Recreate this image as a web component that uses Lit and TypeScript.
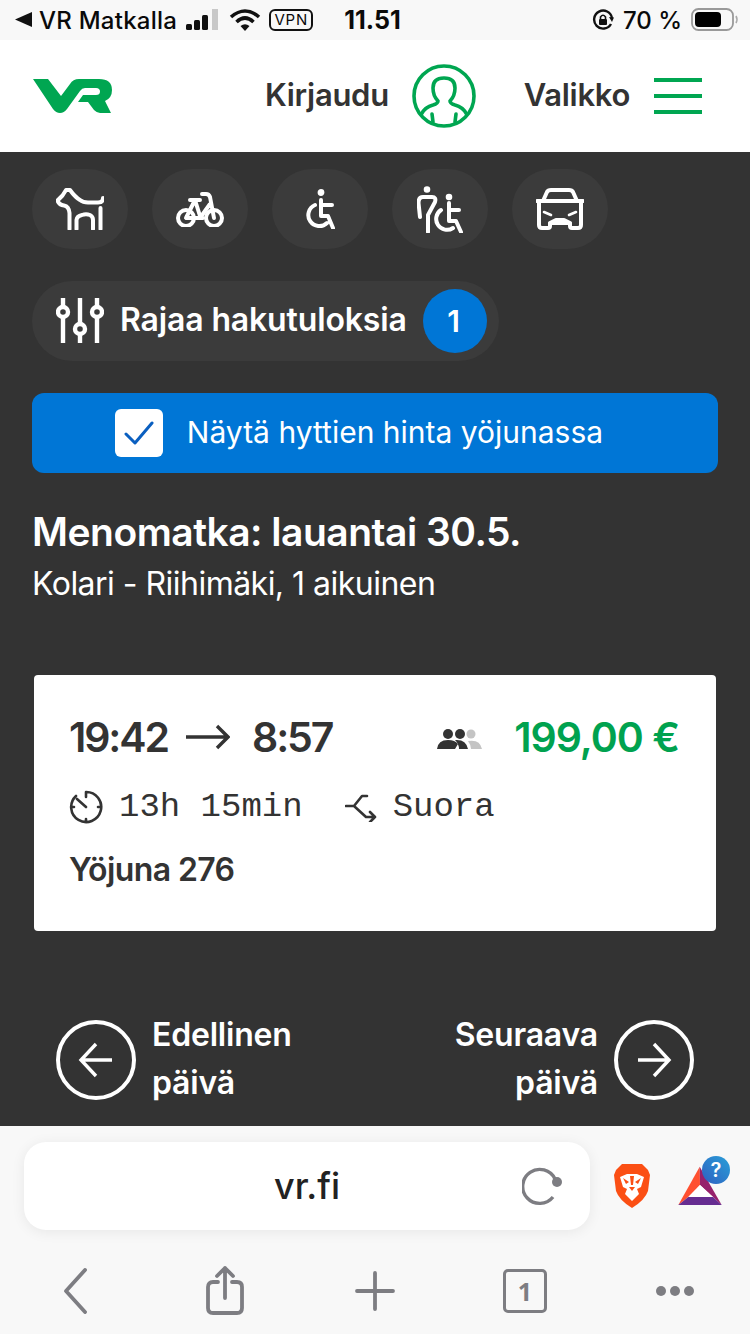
import { LitElement, html, css, svg } from "lit";
import { customElement } from "lit/decorators.js";

const dog = svg`<path d="M1.5 12.5 L6.5 7.5 L10 2 H14 Q19 9 24 12 Q27 14.5 32 14.5 H42 Q47 14.5 47 10 M1.5 12.5 Q3 17 8 17.5 Q13 18.5 13.5 25 V41 M20.5 41 V32 Q21 28 26 27 Q30 25.5 34 27 Q37 28.5 37 32 V41 M44.5 20 V41"/>`;
const bike = svg`<circle cx="10" cy="27" r="8"/><circle cx="38" cy="27" r="8"/><path d="M14 9 H24 M26 3 H30 Q33 3 34 6 L38 27 M19 9 L10 27 H27 M19 9 L24 25 M34 13 L24 27"/>`;
const chair = svg`<circle cx="16" cy="3.5" r="2.2" fill="#fff" stroke-width="2.4"/><path d="M16 11 V27 H23 L28 39 M16 16 H27 M10 16 A11 11 0 1 0 22 34"/>`;
const both = svg`<circle cx="10" cy="3.5" r="2" fill="#fff" stroke-width="2.6"/><circle cx="32" cy="11" r="2" fill="#fff" stroke-width="2.6"/><path d="M3 31 L1.5 17 Q1.5 11 6 11 H15 Q19.5 11 18 16 L11 29 V46 M32 17 V35 H39 L44 46 M32 24 H42 M24 24 A10.5 10.5 0 1 0 36 42"/>`;
const car = svg`<path d="M1 13 H47 M7 13 L11 4 Q12 2 15 2 H33 Q36 2 37 4 L41 13 M3 13 V37 Q3 40 6 40 H12 Q14 40 14 38 V35 H34 V38 Q34 40 36 40 H42 Q45 40 45 37 V13 M14 35 L20 32 H28 L34 35"/><path d="M8 24 L15 27 M40 24 L33 27" stroke-width="2.6"/>`;

@customElement("app-root")
export class AppRoot extends LitElement {
  static styles = css`
    :host { display: block; width: 750px; height: 1334px; overflow: hidden; font-family: Inter, "Liberation Sans", sans-serif; color: #333; }
    svg { display: block; flex: none; }
    .status { height: 40px; background: #f8f8f8; color: #0a0a0a; display: flex; align-items: center; font-size: 24px; font-weight: 500; padding-left: 15px; box-sizing: border-box; position: relative; }
    .status .carrier { margin-left: 6px; letter-spacing: .25px; }
    .vpn { border: 2px solid #111; border-radius: 6px; font-size: 15px; line-height: 18px; height: 18px; width: 40px; text-align: center; letter-spacing: .8px; font-weight: 400; margin-left: 8px; }
    .clock { font-weight: 700; font-size: 25px; margin-left: 31px; width: 62px; }
    .status-right { margin-left: auto; display: flex; align-items: center; padding-right: 11px; gap: 9px; }
    .header { height: 112px; background: #fff; display: flex; align-items: center; padding: 0 48px 0 32px; }
    .logo { margin-right: 153px; }
    .nav { font-size: 31px; line-height: 36px; margin-top: -2px; font-weight: 600; color: #333; letter-spacing: -.3px; }
    .user { margin: 0 48px 0 23px; }
    .burger { margin-left: 24px; width: 48px; display: flex; flex-direction: column; gap: 12px; }
    .burger i { display: block; height: 4px; background: #00a651; }
    main { height: 974px; box-sizing: border-box; background: #333; padding: 17px 32px 0; color: #fff; }
    .icons { display: flex; gap: 24px; }
    .icons div { width: 96px; height: 80px; border-radius: 40px; background: #3b3b3b; display: flex; align-items: center; justify-content: center; }
    .icons svg { fill: none; stroke: #fff; stroke-width: 4; stroke-linecap: round; stroke-linejoin: round; }
    .filter { margin-top: 32px; width: 467px; height: 80px; border-radius: 40px; background: #3b3b3b; display: flex; align-items: center; padding: 0 12px 0 24px; box-sizing: border-box; font-size: 32px; line-height: 40px; font-weight: 600; }
    .filter span { margin-left: 16px; letter-spacing: -.15px; margin-top: -3px; }
    .badge { margin-left: auto; width: 64px; height: 64px; border-radius: 50%; background: #0076d6; display: flex; align-items: center; justify-content: center; font-size: 30px; padding-right: 3px; box-sizing: border-box; }
    .check { margin-top: 32px; height: 80px; border-radius: 12px; background: #0076d6; display: flex; align-items: center; justify-content: center; gap: 24px; font-size: 30px; line-height: 36px; padding-right: 32px; box-sizing: border-box; }
    .check span { margin-top: -2px; }
    .box { width: 48px; height: 48px; background: #fff; border-radius: 6px; display: flex; align-items: center; justify-content: center; }
    h1 { margin: 37px 0 0; font-size: 39px; line-height: 44px; font-weight: 600; letter-spacing: -.5px; }
    .sub { margin: 12px 0 0; font-size: 32px; line-height: 36px; letter-spacing: -.52px; }
    .card { margin: 73px 2px 0; height: 256px; background: #fff; border-radius: 4px; color: #333; padding: 36px 37px 0 35px; box-sizing: border-box; }
    .row1 { display: flex; align-items: center; height: 52px; font-size: 41px; font-weight: 600; letter-spacing: -2.1px; }
    .row1 .arrow { margin: 0 22px 0 18px; }
    .people { margin-left: 105px; }
    .price { margin-left: auto; color: #00a24f; letter-spacing: -1px; }
    .row2 { display: flex; align-items: center; height: 36px; margin-top: 26px; font-family: "Liberation Mono", monospace; font-size: 34px; color: #333; }
    .row2 span { margin-left: 16px; }
    .row2 .sw { margin-left: 42px; }
    .train { margin-top: 25px; font-size: 32px; line-height: 40px; font-weight: 600; letter-spacing: -.6px; }
    .days { margin: 82px -8px 0; padding: 0 32px; display: flex; justify-content: space-between; font-size: 32px; font-weight: 600; line-height: 48px; letter-spacing: -.2px; }
    .day { display: flex; align-items: center; gap: 16px; }
    .day > div { margin-top: -2px; }
    .day.right { text-align: right; }
    .browser { height: 208px; background: #f8f8f8; padding: 16px 0 0 24px; box-sizing: border-box; }
    .url-row { display: flex; align-items: center; }
    .url { width: 566px; height: 88px; background: #fff; border-radius: 22px; box-shadow: 0 2px 14px rgba(0,0,0,.07); display: flex; align-items: center; justify-content: center; position: relative; font-size: 36px; font-weight: 500; color: #222; box-sizing: border-box; }
    .reload { position: absolute; right: 28px; top: 24px; }
    .brave { margin-left: 23px; }
    .bat { margin: 0 0 10px 27px; }
    .tools { display: flex; align-items: center; margin-top: 31px; padding-left: 39px; height: 60px; }
    .tools svg { fill: none; stroke: #7d7d82; stroke-width: 3.8; stroke-linecap: round; stroke-linejoin: round; }
    .tools .share { margin-left: 119px; }
    .tools .plus { margin-left: 111px; }
    .tab { margin-left: 108px; width: 44px; height: 44px; box-sizing: border-box; border: 3.5px solid #7d7d82; border-radius: 5px; font-size: 25px; font-weight: 700; color: #7d7d82; display: flex; align-items: center; justify-content: center; font-family: "Open Sans", sans-serif; }
    .tools .dots { margin-left: 108px; }
  `;

  render() {
    return html`
      <div class="status">
        <svg width="18" height="18" viewBox="0 0 18 18"><path d="M17 1 V16 L0 8.5 Z" fill="#111"/></svg>
        <span class="carrier">VR Matkalla</span>
        <svg style="margin-left:8px" width="34" height="22" viewBox="0 0 34 22">
          <rect x="1" y="15" width="6" height="6" rx="1.5" fill="#111"/><rect x="9" y="11" width="6" height="10" rx="1.5" fill="#111"/><rect x="17" y="6" width="6" height="15" rx="1.5" fill="#111"/><rect x="27" y="0" width="6" height="21" fill="#c8c8c8"/>
        </svg>
        <svg style="margin-left:10px" width="32" height="24" viewBox="0 0 32 24" fill="none" stroke="#111" stroke-width="3.6">
          <path d="M2 9 Q16 -3 30 9 M7.5 14 Q16 6 24.5 14"/><path d="M11.5 18 Q16 14.5 20.5 18 L16 23 Z" fill="#111" stroke="none"/>
        </svg>
        <div class="vpn">VPN</div>
        <div class="clock">11.51</div>
        <div class="status-right">
          <svg width="22" height="22" viewBox="0 0 22 22" fill="none" stroke="#111" stroke-width="2.4"><path d="M19 15 A9 9 0 1 1 20 9"/><path d="M17 8 L22 8.5 L20 13 Z" fill="#111" stroke="none"/><rect x="7" y="10" width="8" height="6" rx="1" fill="#111" stroke="none"/><path d="M8.5 10 V8 Q11 4.5 13.5 8 V10" stroke-width="1.6"/></svg>
          <span>70 %</span>
          <svg width="48" height="24" viewBox="0 0 48 24"><rect x="1" y="1" width="41" height="21" rx="6.5" fill="none" stroke="#999" stroke-width="1.8"/><rect x="4" y="4" width="26" height="15" rx="4" fill="#000"/><path d="M45 8 Q47 11.5 45 15" fill="none" stroke="#aaa" stroke-width="1.6"/></svg>
        </div>
      </div>

      <div class="header">
        <svg class="logo" width="80" height="36" viewBox="0 0 80 36"><path fill="#00a651" d="M1 1 H16 L29 18 L38 6 Q41 1 47 1 H67 Q80 1 80 12 Q80 20 73 23 L79 35 H68 Q65 35 62 32 L56 24 H46 L51 17 H64 Q68 17 68 13.5 Q68 10 64 10 H53 Q50 10 48 13 L35 31 Q32 35 28 35 Q24 35 21 31 Z"/></svg>
        <span class="nav">Kirjaudu</span>
        <svg class="user" width="64" height="64" viewBox="0 0 64 64" fill="none" stroke="#00a651" stroke-width="3.6" stroke-linecap="round" stroke-linejoin="round">
          <circle cx="32" cy="32" r="30"/>
          <path d="M9.5 50 Q13 43 21 41 Q26 39.5 26 37 Q21 32 21 24 Q21 14 32 14 Q43 14 43 24 Q43 32 38 37 Q38 39.5 43 41 Q51 43 54.5 50 M20 50 L21 58 M44 50 L43 58"/>
        </svg>
        <span class="nav">Valikko</span>
        <div class="burger"><i></i><i></i><i></i></div>
      </div>

      <main>
        <div class="icons">
          <div><svg width="48" height="42" viewBox="0 0 48 42">${dog}</svg></div>
          <div><svg width="48" height="36" viewBox="0 0 48 36">${bike}</svg></div>
          <div><svg width="30" height="40" viewBox="0 0 30 40">${chair}</svg></div>
          <div><svg width="46" height="47" viewBox="0 0 46 47">${both}</svg></div>
          <div><svg width="48" height="42" viewBox="0 0 48 42">${car}</svg></div>
        </div>

        <div class="filter">
          <svg width="48" height="48" viewBox="0 0 48 48" fill="none" stroke="#fff" stroke-width="4.4">
            <path d="M7 1 V10 M7 20 V46 M24 1 V27 M24 37 V46 M41 1 V10 M41 20 V46"/>
            <circle cx="7" cy="15" r="5"/><circle cx="24" cy="32" r="5"/><circle cx="41" cy="15" r="5"/>
          </svg>
          <span>Rajaa hakutuloksia</span>
          <div class="badge">1</div>
        </div>

        <div class="check">
          <div class="box"><svg width="30" height="24" viewBox="0 0 30 24" fill="none" stroke="#0a5fc0" stroke-width="3" stroke-linecap="round" stroke-linejoin="round"><path d="M2 13 L11 22 L28 2"/></svg></div>
          <span>Näytä hyttien hinta yöjunassa</span>
        </div>

        <h1>Menomatka: lauantai 30.5.</h1>
        <div class="sub">Kolari - Riihimäki, 1 aikuinen</div>

        <div class="card">
          <div class="row1">
            <span>19:42</span>
            <svg class="arrow" width="44" height="26" viewBox="0 0 44 26" fill="none" stroke="#333" stroke-width="3.4"><path d="M0 13 H42 M31 2 L42 13 L31 24"/></svg>
            <span>8:57</span>
            <svg class="people" width="46" height="24" viewBox="0 0 46 24">
              <circle cx="11" cy="9" r="5" fill="#333"/><circle cx="23" cy="9" r="5" fill="#333"/><circle cx="34" cy="9" r="4.5" fill="#c4c4c4"/>
              <path d="M0 24 Q1 15 11 15 Q18 15 21 19 L18 24 Z" fill="#333"/><path d="M18 15 Q29 14 31 24 H22 Q22 19 18 15 Z" fill="#333"/><path d="M31 16 Q43 14 45 24 H34 Q34 20 31 16 Z" fill="#c4c4c4"/>
            </svg>
            <span class="price">199,00 €</span>
          </div>
          <div class="row2">
            <svg width="34" height="34" viewBox="0 0 34 34" fill="none" stroke="#333" stroke-width="2.6" stroke-linecap="round"><path d="M17 2 A15 15 0 1 1 7 6 M17 7 V2 M8 9 L17 17 M32 17 H29 M17 32 V29 M2 17 H5"/></svg>
            <span>13h 15min</span>
            <svg class="sw" width="32" height="30" viewBox="0 0 32 30" fill="none" stroke="#333" stroke-width="2.6" stroke-linecap="round" stroke-linejoin="round"><path d="M1 14 H9 L17 4 H22 M9 14 L21 25 H30 M25 20 L30 25 L25 30"/></svg>
            <span>Suora</span>
          </div>
          <div class="train">Yöjuna 276</div>
        </div>

        <div class="days">
          <div class="day">
            <svg width="80" height="80" viewBox="0 0 80 80" fill="none" stroke="#fff" stroke-width="4"><circle cx="40" cy="40" r="38"/><path d="M25 40 H56 M40 24 L25 40 L40 56" stroke-width="3.4"/></svg>
            <div>Edellinen<br />päivä</div>
          </div>
          <div class="day right">
            <div>Seuraava<br />päivä</div>
            <svg width="80" height="80" viewBox="0 0 80 80" fill="none" stroke="#fff" stroke-width="4"><circle cx="40" cy="40" r="38"/><path d="M24 40 H55 M40 24 L55 40 L40 56" stroke-width="3.4"/></svg>
          </div>
        </div>
      </main>

      <div class="browser">
        <div class="url-row">
          <div class="url">vr.fi
            <svg class="reload" width="40" height="40" viewBox="0 0 40 40" fill="none" stroke="#7d7d82" stroke-width="3.4"><path d="M33 13 A17 17 0 1 0 31 31"/><circle cx="35" cy="16" r="5" fill="#7d7d82" stroke="none"/></svg>
          </div>
          <svg class="brave" width="38" height="46" viewBox="0 0 38 46">
            <path fill="#fb4f14" d="M9 1 H29 L35 7 L37 12 L35 28 Q32 37 19 45 Q6 37 3 28 L1 12 L3 7 Z"/>
            <path fill="#fff" d="M7 14 L14 11 H24 L31 14 L28 24 L24 26 L26 31 L19 38 L12 31 L14 26 L10 24 Z"/>
            <path fill="#fb4f14" d="M10 15 L16 19 L13 21 Z M28 15 L22 19 L25 21 Z M16 24 H22 L19 28 Z M17 13 H21 L20 22 H18 Z"/>
          </svg>
          <svg class="bat" width="52" height="50" viewBox="0 0 52 50">
            <defs><linearGradient id="bq" x1="0" y1="1" x2="1" y2="0"><stop offset="0" stop-color="#2f5fc0"/><stop offset="1" stop-color="#2a9fd8"/></linearGradient></defs>
            <path fill="#ff5030" d="M21.7 10.7 L0.3 49 L10.3 41 L22 29 Z"/>
            <path fill="#96206b" d="M21.7 10.7 L43.7 49 L35 41 L22 29 Z"/>
            <path fill="#662d91" d="M0.3 49 L10.3 41 H35 L43.7 49 Z"/>
            <path fill="#fff" d="M22 29 L35 41 H10.3 Z"/>
            <circle cx="38" cy="14" r="14" fill="url(#bq)"/>
            <text x="38" y="21" text-anchor="middle" font-family="Inter, sans-serif" font-size="20" font-weight="600" fill="#fff">?</text>
          </svg>
        </div>
        <div class="tools">
          <svg width="24" height="46" viewBox="0 0 24 46"><path d="M22 2 L3 23 L22 44"/></svg>
          <svg class="share" width="38" height="50" viewBox="0 0 38 50"><path d="M12 16 H7 Q2 16 2 21 V42 Q2 47 7 47 H31 Q36 47 36 42 V21 Q36 16 31 16 H26 M19 32 V2 M11 10 L19 2 L27 10"/></svg>
          <svg class="plus" width="40" height="40" viewBox="0 0 40 40"><path d="M20 2 V38 M2 20 H38"/></svg>
          <div class="tab">1</div>
          <svg class="dots" width="40" height="12" viewBox="0 0 40 12"><g fill="#7d7d82" stroke="none"><circle cx="6" cy="6" r="5"/><circle cx="20" cy="6" r="5"/><circle cx="34" cy="6" r="5"/></g></svg>
        </div>
      </div>
    `;
  }
}
